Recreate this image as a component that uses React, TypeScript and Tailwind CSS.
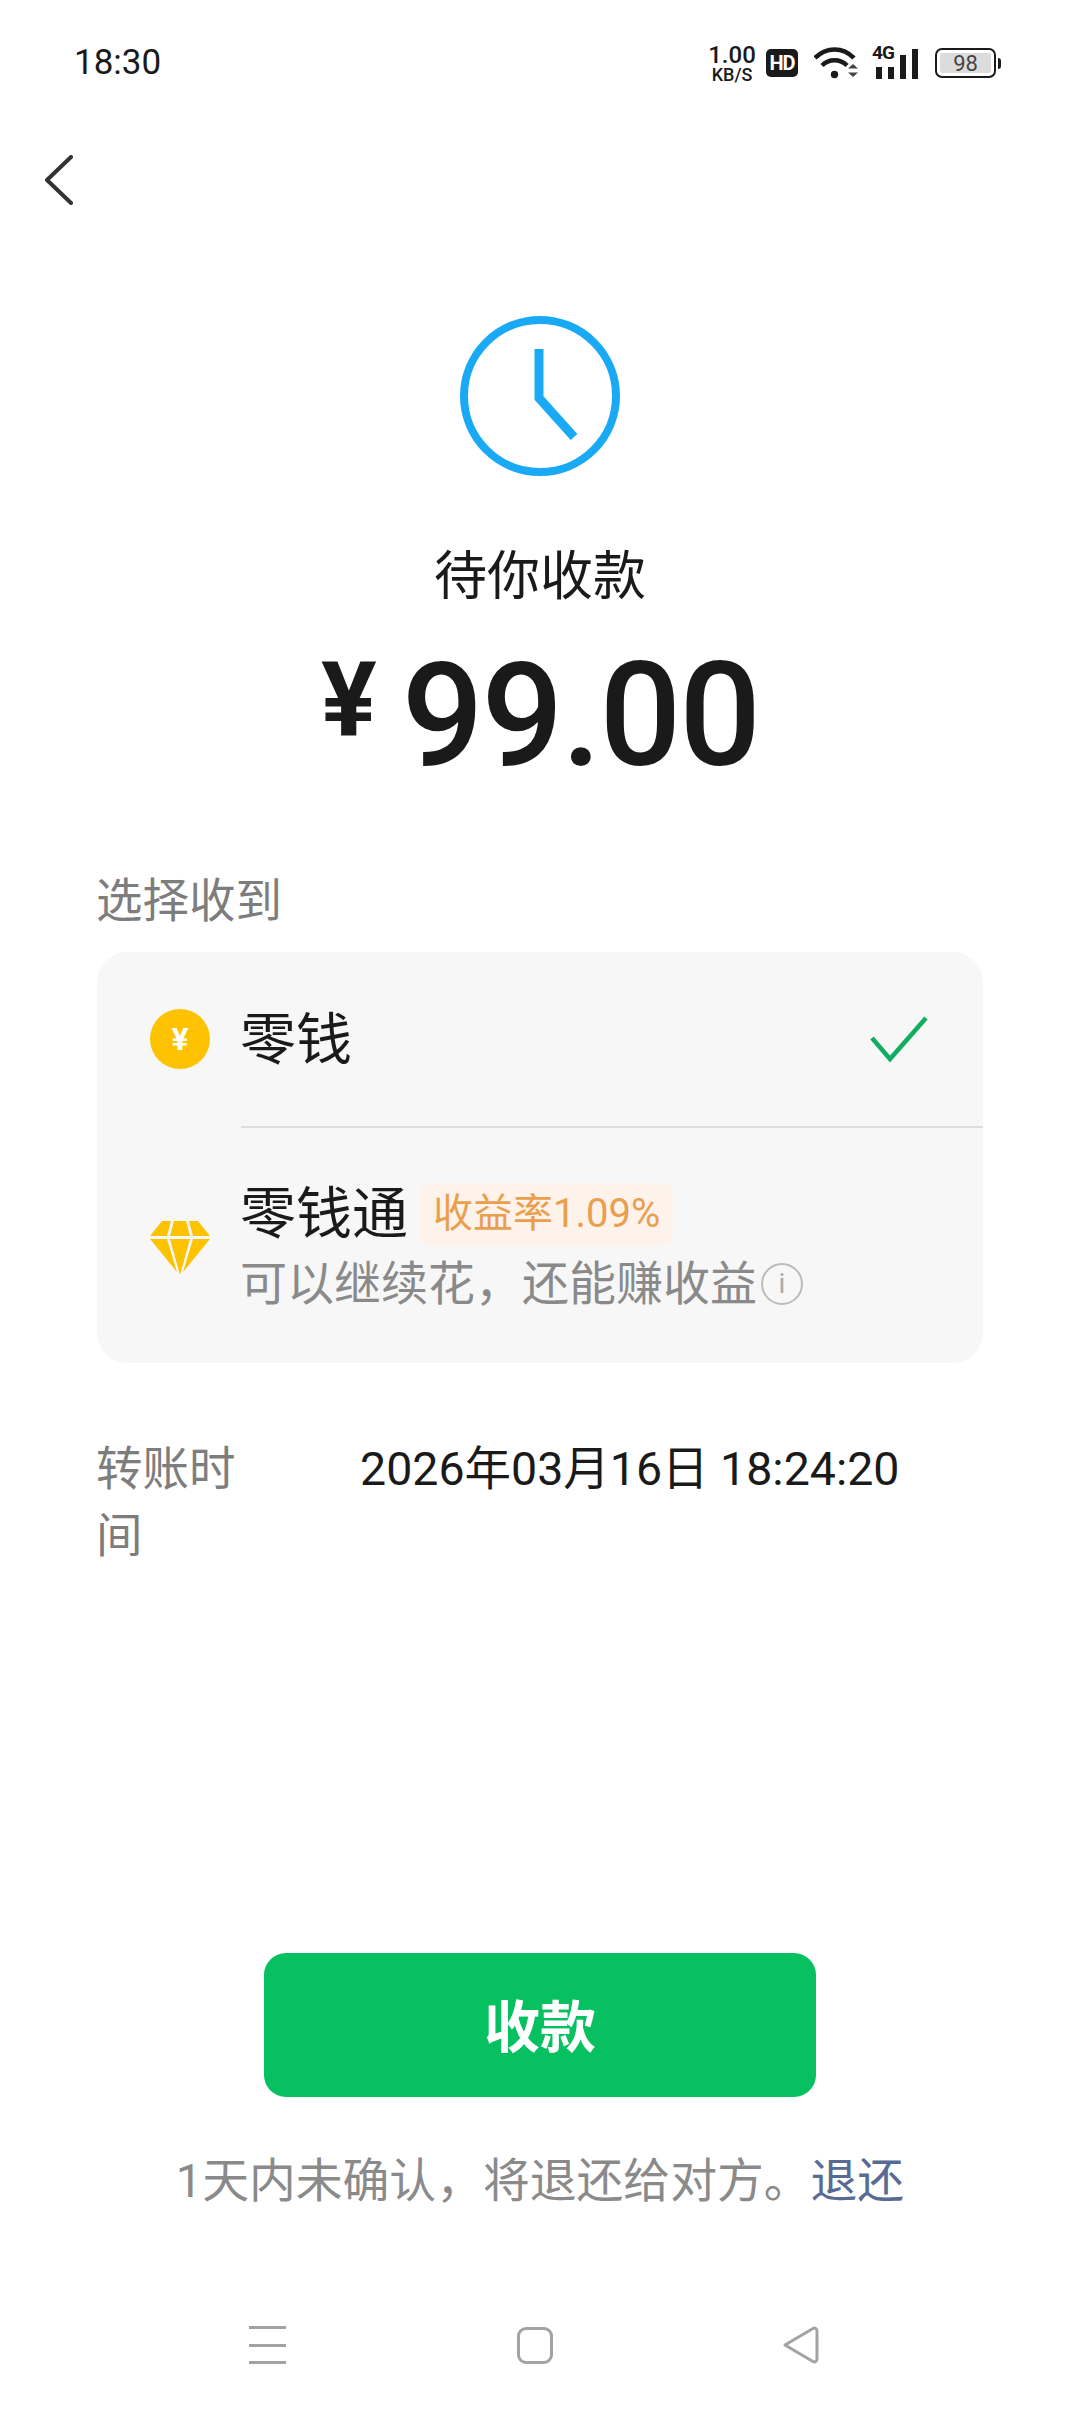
import React from "react";

const cjk = "font-['Roboto','Noto_Sans_CJK_SC',sans-serif]";

const StatusIcons = () => (
  <div className="flex items-center">
    {/* network speed */}
    <div className="flex w-[50px] flex-col items-center font-['Roboto',sans-serif] font-medium text-[#1a1a1a]">
      <span className="text-[24px] leading-[20px]">1.00</span>
      <span className="mt-[2px] text-[18px] leading-[15px]">KB/S</span>
    </div>
    <div className="ml-[9px] flex h-[28px] w-[32px] items-center justify-center rounded-[5px] bg-[#1a1a1a] font-['Roboto',sans-serif] text-[20px] font-bold text-white">
      <span className="tracking-[-1px]">HD</span>
    </div>
    <svg className="ml-[16px]" width="44" height="32" viewBox="0 0 44 32" fill="none">
      <path d="M1 11C12 -0.500 29 -0.500 40 11" stroke="#1a1a1a" strokeWidth="4.500" />
      <path d="M8 18.500C15 11.500 26 11.500 33 18.500" stroke="#1a1a1a" strokeWidth="4.500" />
      <circle cx="20.500" cy="27.500" r="3.700" fill="#1a1a1a" />
      <path d="M34 21.500L39 17L44 21.500Z M34 25.500L44 25.500L39 30Z" fill="#444" />
    </svg>
    <div className="relative ml-[14px] flex h-[32px] w-[46px] items-end gap-[6px] pl-[4px]">
      <span className="absolute left-0 top-[-3px] font-['Roboto',sans-serif] text-[19px] font-bold leading-[18px] tracking-[-1px] text-[#1a1a1a]">4G</span>
      <div className="h-[12px] w-[6px] bg-[#1a1a1a]" />
      <div className="h-[12px] w-[6px] bg-[#1a1a1a]" />
      <div className="h-[24px] w-[6px] bg-[#1a1a1a]" />
      <div className="h-[30px] w-[6px] bg-[#1a1a1a]" />
    </div>
    <div className="ml-[17px] flex items-center">
      <div className="flex h-[30px] w-[61px] items-center rounded-[7px] border-2 border-[#1a1a1a] p-[3px]">
        <div className="flex h-full w-full items-center justify-center rounded-[2px] bg-[#dcdcdc] font-['Roboto',sans-serif] text-[22px] text-[#444]">98</div>
      </div>
      <div className="ml-[2px] h-[11px] w-[3px] rounded-r-sm bg-[#1a1a1a]" />
    </div>
  </div>
);

export default function App() {
  return (
    <div className={`flex h-[2412px] w-[1080px] flex-col overflow-hidden bg-white text-[#1a1a1a] ${cjk}`}>
      {/* Status bar */}
      <div className="flex h-[124px] items-center justify-between pl-[74px] pr-[79px] pt-[2px]">
        <span className="font-['Roboto',sans-serif] text-[35px]">18:30</span>
        <StatusIcons />
      </div>

      {/* Back */}
      <div className="h-[192px] pl-[44px] pt-[31px]">
        <svg width="30" height="50" viewBox="0 0 30 50" fill="none">
          <path d="M27 2L3 25L27 48" stroke="#333" strokeWidth="4" strokeLinecap="round" strokeLinejoin="round" />
        </svg>
      </div>

      {/* Pending */}
      <div className="flex flex-col items-center">
        <svg width="160" height="160" viewBox="0 0 160 160" fill="none">
          <circle cx="80" cy="80" r="76" stroke="#19a9f5" strokeWidth="8" />
          <path d="M79 33V82L114 121" stroke="#19a9f5" strokeWidth="9" />
        </svg>
        <div className="mt-[66px] text-[53px] leading-[70px]">待你收款</div>
        <div className="mt-[29px] flex h-[150px] items-center">
          <span className="mb-[32px] mr-[25px] font-['Roboto',sans-serif] text-[104px] font-bold leading-none">¥</span>
          <span className="font-['Roboto',sans-serif] text-[144px] font-medium leading-none tracking-[-2px]">99.00</span>
        </div>
      </div>

      {/* Receive to */}
      <div className="mt-[80px] px-[97px]">
        <div className="-ml-[1px] text-[46.500px] leading-[60px] text-[#7d7d7d]">选择收到</div>
        <div className="mt-[21px] h-[411px] rounded-[30px] bg-[#f7f7f7]">
          <div className="flex h-[174px] items-center pl-[53px]">
            <div className="flex h-[60px] w-[60px] shrink-0 items-center justify-center rounded-full bg-[#fdc300] text-[32px] font-bold leading-none text-white">¥</div>
            <div className="ml-[30px] mt-[2px] flex-1 text-[56px] leading-[70px]">零钱</div>
            <svg className="mr-[54px]" width="60" height="48" viewBox="0 0 60 48" fill="none">
              <path d="M3 23L21 44L57 3" stroke="#11ad62" strokeWidth="4.500" />
            </svg>
          </div>
          <div className="ml-[144px] h-[2px] bg-[#dddddd]" />
          <div className="flex items-center pl-[53px] pt-[54px]">
            <svg className="shrink-0" width="60" height="56" viewBox="0 0 60 56" fill="none">
              <path d="M12 1H21L17 16H0Z M24 1H36L40 16H20Z M39 1H48L60 16H43Z M0 19H17L27 52Z M20 19H40L30 55Z M43 19H60L33 52Z" fill="#fdc300" />
            </svg>
            <div className="ml-[30px]">
              <div className="flex h-[64px] items-center">
                <span className="text-[56px] leading-[70px]">零钱通</span>
                <span className="ml-[12px] flex h-[63px] items-center rounded-[10px] bg-[#fdf3ea] px-[13px] text-[40px] text-[#ea9f4e]">收益率1.09%</span>
              </div>
              <div className="mt-[8px] flex items-center text-[47px] leading-[60px] text-[#8a8a8a]">
                可以继续花，还能赚收益
                <span className="ml-[4px] flex h-[42px] w-[42px] items-center justify-center rounded-full border-2 border-[#bbbbbb] font-['Roboto',sans-serif] text-[28px] leading-none text-[#aaaaaa]">i</span>
              </div>
            </div>
          </div>
        </div>

        {/* Transfer time */}
        <div className="mt-[73px] flex text-[46.500px] leading-[67px]">
          <div className="-ml-[1px] w-[141px] text-[#7d7d7d]">转账时间</div>
          <div className="ml-[123px] whitespace-nowrap">2026年03月16日 18:24:20</div>
        </div>
      </div>

      {/* Action */}
      <div className="mt-[383px] flex flex-col items-center">
        <button className="flex h-[144px] w-[552px] items-center justify-center rounded-[22px] bg-[#07c160] pt-[6px] text-[56px] font-bold text-white">收款</button>
        <div className="mt-[51px] text-[46.800px] leading-[66px] text-[#8a8a8a]">
          1天内未确认，将退还给对方。<span className="text-[#576b95]">退还</span>
        </div>
      </div>

      {/* Navigation bar */}
      <div className="mt-[112px] flex items-center pl-[249px]">
        <div className="flex h-[38px] w-[37px] flex-col justify-between">
          <div className="h-[3px] bg-[#a3a3a3]" />
          <div className="h-[3px] bg-[#a3a3a3]" />
          <div className="h-[3px] bg-[#a3a3a3]" />
        </div>
        <div className="ml-[231px] h-[37px] w-[36px] rounded-[9px] border-[3px] border-[#a3a3a3]" />
        <svg className="ml-[229px]" width="37" height="38" viewBox="0 0 37 38" fill="none">
          <path d="M3 19L31 2.500C33 1.500 35 2.500 35 5V33C35 35.500 33 36.500 31 35.500L3 19Z" stroke="#a3a3a3" strokeWidth="3" strokeLinejoin="round" />
        </svg>
      </div>
    </div>
  );
}
